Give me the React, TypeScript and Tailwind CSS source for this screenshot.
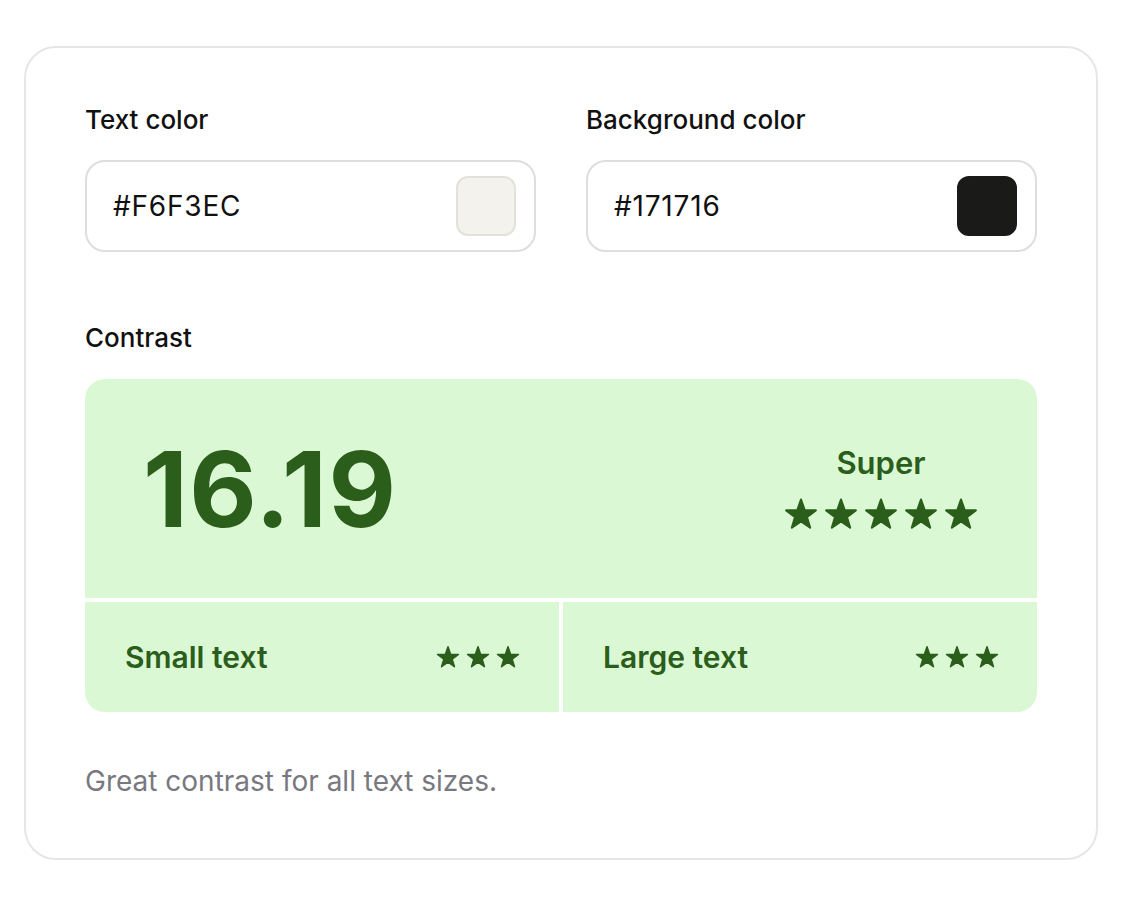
import React from "react";

const GREEN = "#2b5d1b";

function Star({ size }: { size: number }) {
  return (
    <svg width={size} height={size} viewBox="0 0 24 24" className="shrink-0">
      <path
        d="M12 1.8 L14.59 9.24 L22.46 9.4 L16.18 14.16 L18.47 21.7 L12 17.2 L5.53 21.7 L7.82 14.16 L1.54 9.4 L9.41 9.24 Z"
        fill={GREEN}
        stroke={GREEN}
        strokeWidth={1.5}
        strokeLinejoin="round"
      />
    </svg>
  );
}

function ColorField({ label, value, swatch, swatchBorder }: { label: string; value: string; swatch: string; swatchBorder: string }) {
  return (
    <div className="flex flex-col">
      <div className="text-[26px] leading-[32px] font-medium text-[#111111]">{label}</div>
      <div className="mt-[24px] h-[92px] rounded-[20px] border-2 border-[#dedede] flex items-center justify-between pl-[26px] pr-[18px]">
        <span className="text-[28px] text-[#111111] tracking-[0.8px]">{value}</span>
        <div className={`w-[60px] h-[60px] rounded-[12px] border-2 ${swatchBorder}`} style={{ background: swatch }} />
      </div>
    </div>
  );
}

export default function App() {
  return (
    <div className="min-h-[904px] bg-white pt-[46px] pl-[24px]" style={{ fontFamily: "Inter, 'Noto Sans', sans-serif" }}>
      <div className="w-[1074px] h-[814px] rounded-[32px] border-2 border-[#e6e6e6] px-[59px] pt-[56px]">
        <div className="grid grid-cols-2 gap-[50px]">
          <ColorField label="Text color" value="#F6F3EC" swatch="#F3F2EC" swatchBorder="border-[#e2e2da]" />
          <ColorField label="Background color" value="#171716" swatch="#1a1a18" swatchBorder="border-[#1a1a18]" />
        </div>

        <div className="mt-[70px] text-[26px] leading-[32px] font-medium text-[#111111]">Contrast</div>

        <div className="mt-[25px] rounded-[20px] overflow-hidden flex flex-col gap-[4px]" style={{ color: GREEN }}>
          <div className="h-[219px] bg-[#dbf8d5] flex items-center justify-between pl-[58px] pr-[59px]">
            <div className="text-[104px] leading-none font-bold tracking-[1.5px]">16.19</div>
            <div className="flex flex-col items-center gap-[18px]">
              <div className="text-[31px] leading-[32px] font-semibold">Super</div>
              <div className="flex gap-[6px]">
                <Star size={34} />
                <Star size={34} />
                <Star size={34} />
                <Star size={34} />
                <Star size={34} />
              </div>
            </div>
          </div>
          <div className="grid grid-cols-2 gap-[4px] h-[110px]">
            <div className="bg-[#dbf8d5] flex items-center justify-between pl-[40px] pr-[39px]">
              <span className="text-[30px] font-semibold">Small text</span>
              <div className="flex gap-[6px]">
                <Star size={24} />
                <Star size={24} />
                <Star size={24} />
              </div>
            </div>
            <div className="bg-[#dbf8d5] flex items-center justify-between pl-[40px] pr-[38px]">
              <span className="text-[30px] font-semibold">Large text</span>
              <div className="flex gap-[6px]">
                <Star size={24} />
                <Star size={24} />
                <Star size={24} />
              </div>
            </div>
          </div>
        </div>

        <div className="mt-[48px] text-[28px] text-[#78787f]">Great contrast for all text sizes.</div>
      </div>
    </div>
  );
}
